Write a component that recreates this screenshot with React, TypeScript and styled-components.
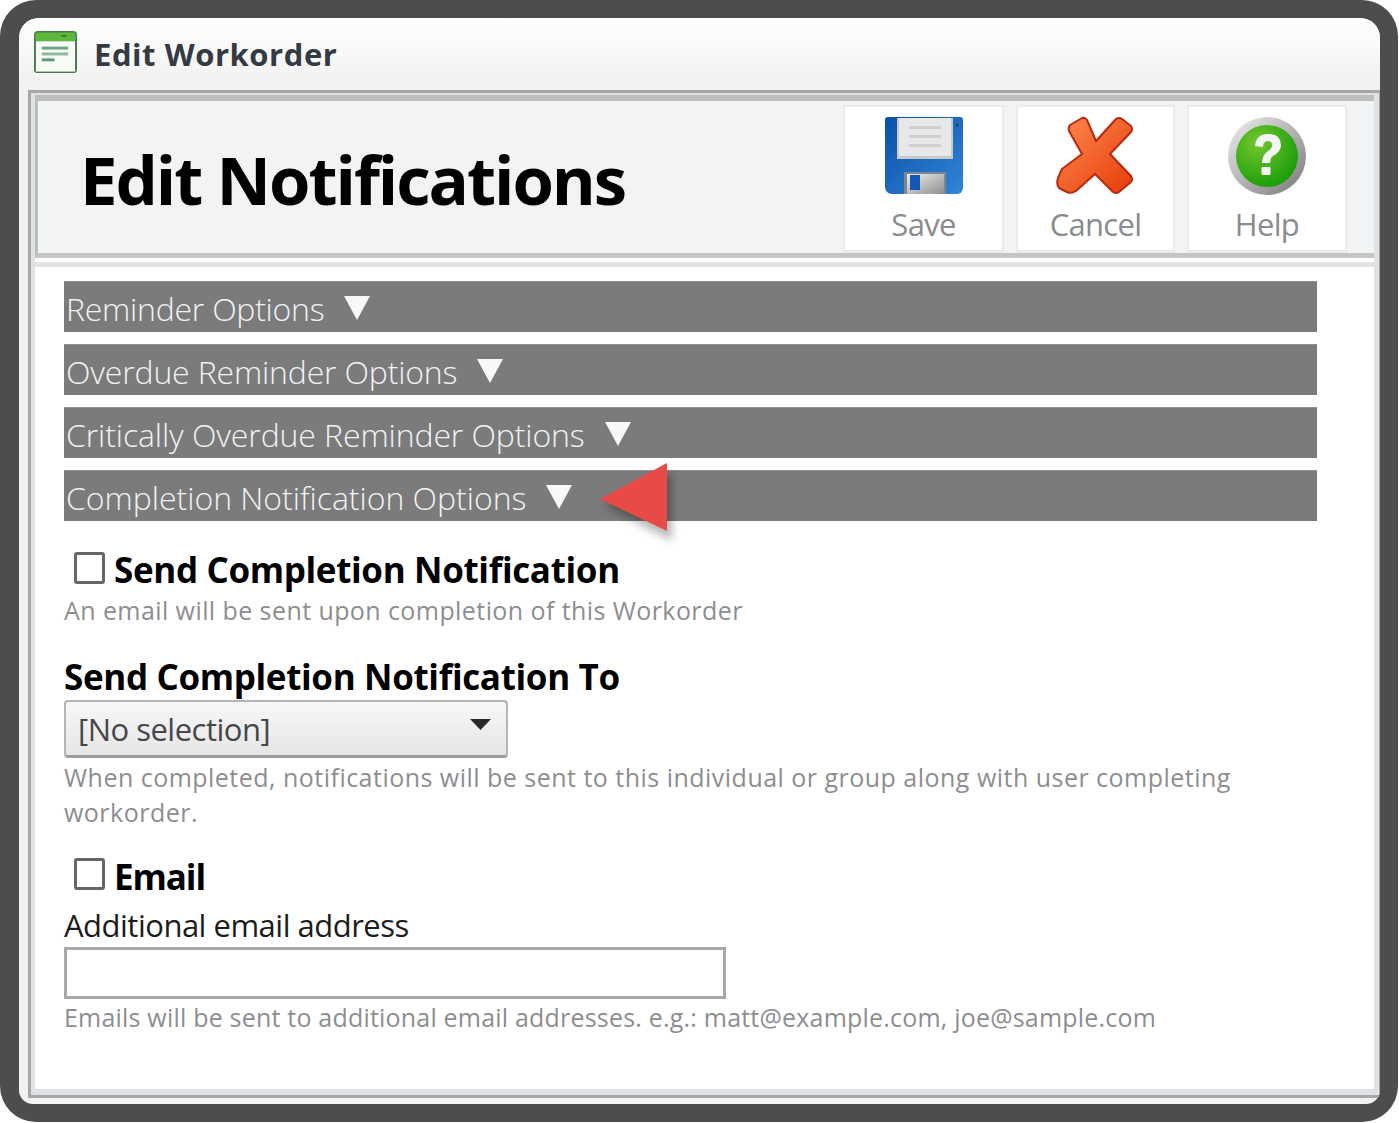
import React from "react";
import styled, { createGlobalStyle } from "styled-components";

const Global = createGlobalStyle`
  html, body { margin: 0; padding: 0; background: #fff; }
  #root { width: 1399px; height: 1123px; overflow: hidden; }
  * { box-sizing: border-box; }
  body { font-family: "Open Sans", "Noto Sans", "Liberation Sans", sans-serif; }
`;

const Frame = styled.div`
  width: 1398px;
  height: 1122px;
  background: #4d4d4d;
  border-radius: 36px;
  padding: 18px 18px 18px 19px;
`;

const Window = styled.div`
  width: 100%;
  height: 100%;
  border-radius: 20px 20px 14px 14px;
  background: #f2f2f2;
  overflow: hidden;
  display: flex;
  flex-direction: column;
`;

const TitleBar = styled.div`
  height: 72px;
  flex: none;
  display: flex;
  align-items: center;
  padding: 0 0 4px 14px;
  gap: 16px;
  background: linear-gradient(#ffffff, #f0f0f0);
`;

const WindowTitle = styled.div`
  font-size: 31px;
  font-weight: 700;
  color: #333a44;
  letter-spacing: 0.55px;
  margin-top: 4px;
`;

const Chrome = styled.div`
  flex: 1;
  min-height: 0;
  margin: 0 0 6px 9px;
  border: solid #a6a8a8;
  border-width: 3px 1px 3px 3px;
  background: #dfe2e4;
  padding: 2px 5px 6px 4px;
  display: flex;
  flex-direction: column;
`;

const Panel = styled.div`
  flex: 1;
  min-height: 0;
  background: #fff;
  display: flex;
  flex-direction: column;
`;

const Header = styled.header`
  height: 163px;
  flex: none;
  display: flex;
  align-items: stretch;
  background: #f2f3f5;
  border-top: 6px solid #bcbebe;
  border-left: 3px solid #bcbebe;
  border-bottom: 5px solid #c4c6c6;
  padding: 4px 27px 0 0;
`;

const PageTitle = styled.h1`
  flex: 1;
  margin: 0;
  padding: 0 0 0 42px;
  font-size: 67px;
  font-weight: 700;
  line-height: 148px;
  color: #000;
  letter-spacing: -2.05px;
`;

const ToolButton = styled.div<{ $w: number }>`
  width: ${(p) => p.$w}px;
  height: 148px;
  margin-left: 12px;
  background: #fff;
  border: 2px solid #e9ebec;
  border-bottom-width: 3px;
  display: flex;
  flex-direction: column;
  align-items: center;
  padding-top: 9px;
`;

const ToolLabel = styled.span`
  margin-top: 8px;
  font-size: 31px;
  font-weight: 400;
  line-height: 40px;
  color: #8a8c90;
  letter-spacing: -0.7px;
`;

const Rule = styled.div`
  height: 9px;
  flex: none;
  background: #fff;
  border-bottom: 5px solid #e2e3e4;
`;

const Body = styled.div`
  flex: 1;
  padding: 14px 0 0 29px;
`;

const Section = styled.div<{ $ls: number }>`
  position: relative;
  width: 1253px;
  height: 51px;
  margin-bottom: 12px;
  background: #7b7b7b;
  color: #f0f2f4;
  border-top: 1px solid #8f8f8f;
  display: flex;
  align-items: center;
  gap: 20px;
  padding: 4px 0 0 2px;
  font-size: 32px;
  font-weight: 300;
  letter-spacing: ${(p) => p.$ls}px;
  line-height: 46px;
`;

const Caret = styled.svg`
  width: 26px;
  height: 26px;
  flex: none;
  margin-top: -2px;
`;

const Pointer = styled.svg`
  position: absolute;
  left: 536px;
  top: -12px;
  width: 80px;
  height: 84px;
  overflow: visible;
`;

const CheckRow = styled.label<{ $top: number; $pad?: number }>`
  display: flex;
  align-items: center;
  margin-top: ${(p) => p.$top}px;
  padding-left: ${(p) => p.$pad ?? 10}px;
  height: 44px;
`;

const Box = styled.span<{ $lift: number }>`
  width: 31px;
  height: 32px;
  flex: none;
  border: 3px solid #666;
  border-radius: 3px;
  background: #fff;
  margin-top: ${(p) => -p.$lift}px;
`;

const Strong = styled.span<{ $gap?: number; $ls?: number }>`
  font-size: 35px;
  font-weight: 700;
  line-height: 44px;
  color: #000;
  letter-spacing: ${(p) => p.$ls ?? -0.35}px;
  margin-left: ${(p) => p.$gap ?? 0}px;
`;

const Hint = styled.div<{ $top?: number; $ls: number }>`
  margin-top: ${(p) => p.$top ?? 0}px;
  font-size: 25px;
  font-weight: 400;
  line-height: 35px;
  color: #8d8d92;
  letter-spacing: ${(p) => p.$ls}px;
  width: 1200px;
`;

const SelectBox = styled.div`
  width: 444px;
  height: 58px;
  margin-top: 1px;
  border: 2px solid #b5b5b5;
  border-bottom: 3px solid #9c9c9c;
  border-radius: 4px;
  background: linear-gradient(#f7f7f7, #e6e6e6);
  display: flex;
  align-items: center;
  justify-content: space-between;
  padding: 0 15px 0 12px;
  font-size: 31px;
  color: #45474c;
  letter-spacing: -0.5px;
`;

const SelectCaret = styled.svg`
  width: 21px;
  height: 11px;
  flex: none;
  margin-bottom: 8px;
`;

const FieldLabel = styled.div`
  margin-top: 5px;
  font-size: 31px;
  line-height: 42px;
  color: #1c1c1c;
  letter-spacing: -0.5px;
`;

const TextBox = styled.div`
  width: 662px;
  height: 52px;
  margin: 1px 0 1px;
  border: 3px solid #a9a9a9;
  background: #fff;
`;

const WorkorderIcon = () => (
  <svg width="45" height="45" viewBox="0 0 46 46">
    <rect x="1" y="1" width="44" height="43" rx="4" fill="#4a7a4e" />
    <rect x="2.5" y="2.5" width="41" height="9" rx="2" fill="#5cb83c" />
    <rect x="3" y="11.5" width="40" height="31" fill="#f7fbf6" />
    <rect x="9" y="17" width="27" height="3" fill="#6fa583" />
    <rect x="9" y="23" width="27" height="3" fill="#8fb8a0" />
    <rect x="9" y="29" width="13" height="3" fill="#5f9a76" />
    <rect x="29" y="5" width="5" height="2" fill="#2f7a2f" />
  </svg>
);

const FloppyIcon = () => (
  <svg width="80" height="80" viewBox="0 0 80 80">
    <defs>
      <linearGradient id="flop" x1="0" y1="0" x2="1" y2="1">
        <stop offset="0" stopColor="#0c4fa8" />
        <stop offset="1" stopColor="#2f86d8" />
      </linearGradient>
      <linearGradient id="shut" x1="0" y1="0" x2="1" y2="1">
        <stop offset="0" stopColor="#eeeeee" />
        <stop offset="1" stopColor="#8e8e8e" />
      </linearGradient>
    </defs>
    <path d="M4 1h72a3 3 0 0 1 3 3v68a6 6 0 0 1-6 6H8a7 7 0 0 1-7-7V4a3 3 0 0 1 3-3z" fill="url(#flop)" />
    <rect x="13" y="2" width="56" height="41" fill="#c9c9c9" />
    <rect x="15" y="2" width="52" height="38" fill="#e8e8e8" />
    <rect x="25" y="10" width="32" height="3" fill="#cfcfcf" />
    <rect x="25" y="19" width="32" height="3" fill="#cfcfcf" />
    <rect x="25" y="28" width="32" height="3" fill="#cfcfcf" />
    <rect x="20" y="56" width="42" height="22" fill="#7d8590" />
    <rect x="23" y="58" width="37" height="20" fill="url(#shut)" />
    <rect x="26" y="59" width="10" height="15" fill="#1158b8" />
    <circle cx="73" cy="9" r="1.5" fill="#0c3a7c" />
  </svg>
);

const CancelIcon = () => (
  <svg width="80" height="80" viewBox="0 0 80 80">
    <defs>
      <linearGradient id="xg" x1="0" y1="0" x2="1" y2="1">
        <stop offset="0" stopColor="#ff8a50" />
        <stop offset="1" stopColor="#e63c08" />
      </linearGradient>
    </defs>
    <path
      d="M14 9 L26 2 Q29 1 31 4 L40 25 L60 3 Q63 1 66 3 L75 10 Q77 13 75 16 L54 38 L75 60 Q77 64 75 66 L63 76 Q60 78 57 76 L39 58 L20 75 Q15 78 11 76 L3 72 Q0 68 2 62 L6 53 L26 38 L13 15 Q12 11 14 9 Z"
      fill="url(#xg)"
      stroke="#b82a10"
      strokeWidth="2"
      strokeLinejoin="round"
    />
  </svg>
);

const HelpIcon = () => (
  <svg width="80" height="80" viewBox="0 0 80 80">
    <defs>
      <linearGradient id="ring" x1="0" y1="0" x2="1" y2="1">
        <stop offset="0" stopColor="#f0f0f0" />
        <stop offset="1" stopColor="#777" />
      </linearGradient>
      <radialGradient id="ball" cx="0.35" cy="0.3" r="0.8">
        <stop offset="0" stopColor="#74c62e" />
        <stop offset="1" stopColor="#129a06" />
      </radialGradient>
    </defs>
    <circle cx="40" cy="40" r="39" fill="url(#ring)" />
    <circle cx="40" cy="40" r="31" fill="url(#ball)" />
    <path d="M28 30 Q29 18 41 18 Q54 18 54 29 Q54 36 46 40 Q43 42 43 47 H35 Q35 39 41 35 Q46 32 45 28 Q44 25 40 25 Q36 26 36 31 Z" fill="#f4f4f4" />
    <rect x="34.5" y="51" width="9" height="8" rx="1" fill="#f4f4f4" />
  </svg>
);

const DownTriangle = () => (
  <Caret viewBox="0 0 26 26">
    <path d="M0 1 H26 L13 25 Z" fill="#f7f8fa" />
  </Caret>
);

const options = [
  { label: "Reminder Options", ls: -0.25 },
  { label: "Overdue Reminder Options", ls: -0.17 },
  { label: "Critically Overdue Reminder Options", ls: -0.11 },
];

export default function App() {
  return (
    <>
      <Global />
      <Frame>
        <Window>
          <TitleBar>
            <WorkorderIcon />
            <WindowTitle>Edit Workorder</WindowTitle>
          </TitleBar>
          <Chrome>
            <Panel>
              <Header>
                <PageTitle>Edit Notifications</PageTitle>
                <ToolButton $w={161}>
                  <FloppyIcon />
                  <ToolLabel>Save</ToolLabel>
                </ToolButton>
                <ToolButton $w={159}>
                  <CancelIcon />
                  <ToolLabel>Cancel</ToolLabel>
                </ToolButton>
                <ToolButton $w={160}>
                  <HelpIcon />
                  <ToolLabel>Help</ToolLabel>
                </ToolButton>
              </Header>
              <Rule />
              <Body>
                {options.map((o) => (
                  <Section key={o.label} $ls={o.ls}>
                    {o.label}
                    <DownTriangle />
                  </Section>
                ))}
                <Section $ls={-0.03}>
                  Completion Notification Options
                  <DownTriangle />
                  <Pointer viewBox="0 0 80 84">
                    <path d="M0 40 L69 6 V76 Z" fill="#000" opacity="0.28" transform="translate(3 6)" style={{ filter: "blur(4px)" }} />
                    <path d="M0 40 L67 4 V72 Z" fill="#e84a47" />
                  </Pointer>
                </Section>
                <CheckRow $top={27}>
                  <Box $lift={4} />
                  <Strong $gap={9}>Send Completion Notification</Strong>
                </CheckRow>
                <Hint $top={1} $ls={0.42}>An email will be sent upon completion of this Workorder</Hint>
                <CheckRow $top={27} $pad={0}>
                  <Strong>Send Completion Notification To</Strong>
                </CheckRow>
                <SelectBox>
                  [No selection]
                  <SelectCaret viewBox="0 0 21 11">
                    <path d="M0 0 H21 L10.5 11 Z" fill="#2a2a2a" />
                  </SelectCaret>
                </SelectBox>
                <Hint $top={2} $ls={0.48}>When completed, notifications will be sent to this individual or group along with user completing workorder.</Hint>
                <CheckRow $top={25}>
                  <Box $lift={6} />
                  <Strong $gap={9} $ls={-1.1}>Email</Strong>
                </CheckRow>
                <FieldLabel>Additional email address</FieldLabel>
                <TextBox />
                <Hint $ls={0.2}>Emails will be sent to additional email addresses. e.g.: matt@example.com, joe@sample.com</Hint>
              </Body>
            </Panel>
          </Chrome>
        </Window>
      </Frame>
    </>
  );
}
